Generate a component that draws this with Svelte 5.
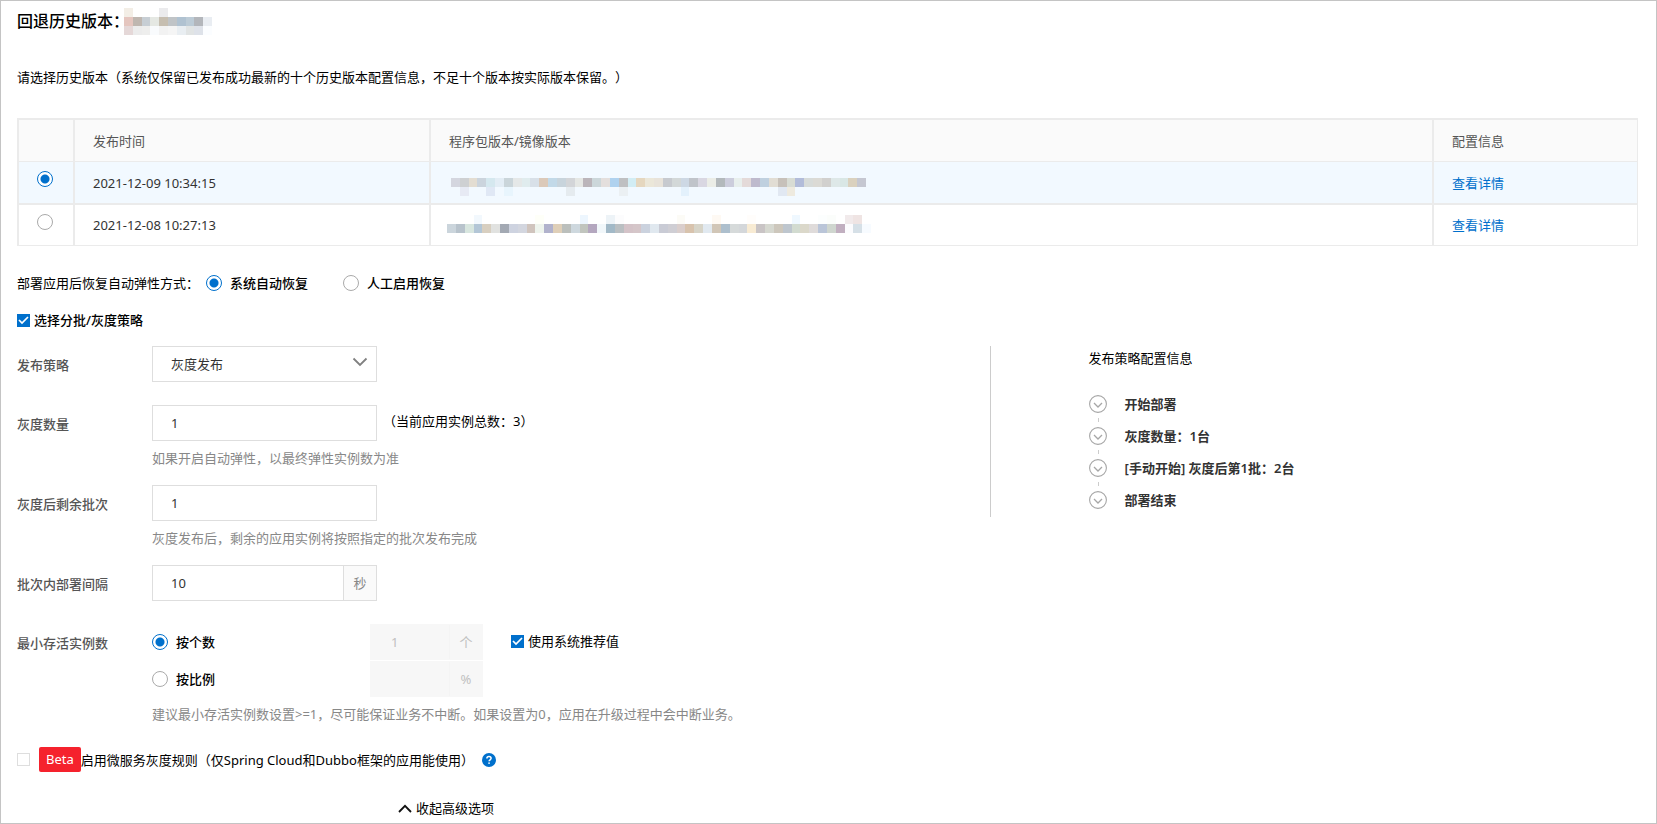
<script>
  let selectedVersion = "v1";
  let restoreMode = "auto";
  let useStrategy = true;
  let strategy = "gray";
  let grayCount = "1";
  let restBatches = "1";
  let interval = "10";
  let aliveMode = "count";
  let aliveCount = "1";
  let alivePercent = "";
  let useRecommended = true;
  let useMicroservice = false;

  // masked values, one string per row of blocks, "-" is an empty block
  const nameMask = [
    "f3eee6 - - - ebebed - - - - -",
    "e5c6bf bfb7b0 c7ced4 e5e8e3 c6beb0 c0c4c7 b0c2d1 bccbd6 b3b6bb e9edf2",
    "e5d8d8 ececec eeeeed f9fbfd f2f2f2 f5f5f5 e9eef2 e1e4e4 dee2e9 fbfdff"
  ];

  const versions = [
    {
      id: "v1",
      time: "2021-12-09 10:34:15",
      mask: [
        "d4d6df ced0d2 e3ddd2 cbd4dd d5e8ef e3edf5 cad5da e5e8e8 e0ecee d8e0e8 dbc9b9 c2d9e8 c8d4dc d3d5d8 e5e7e4 bbb5ba ccd7da e4dfdd afd2ef bfc0c2 d2edf4 e5d7bf ebe7d9 e8e3da c7cacf d3d8d8 cdd8e4 c0c4ca d9d7e2 ebede7 b3b9bc cccddc e8efed e4dad9 bebacd bfd0df e1ddd4 c7c1ba d8dcd4 b2bcd9 d7dbd9 dbdad5 d1d0ce dee8e8 d9e7e5 dad1be c5c7d1",
        "- e7eaf4 - - e0e8f5 - e8f5fd - - - - - - e5ebef - - - - - ebf0f3 - - - - - - e3f1fc - - - - - - - - - - e1e8f2 eeeadf - - - - - - - -"
      ]
    },
    {
      id: "v2",
      time: "2021-12-08 10:27:13",
      mask: [
        "- - - f2f8fd - - - - - - fefff8 - - - - edf6fe - - edf3f7 fcfcfd - - - - - - fcfbf6 - - - fef9f3 - - - fffdfb - - - - eff8ff - - fcfefe fbfdfb - f1eaeb efe4e3 -",
        "cbd5dc b8c3cc d8e6df b3c6d6 d8cfc0 e1e2e0 a3a9b3 ced3e0 d3d6df d0c4bd eef4ed b1b2cc dfcfb8 bbbfbc ced8de c1c5be b4a7bf f1f7fa a2b9c7 babfc2 d4c3c8 d5c6c9 cbd2de e0e8ef c9cbd5 cfced4 dacecc d8c3ad d7d4c8 e1e9f0 d1c6b7 adbfcd d6dada d4d7da f8ebd3 c9c4c5 d6d8d0 cdc7bc bec6ce d2dbd0 dbd8ca dfdbda bac5d8 cfd6cf c1afc0 fcfcfe d6e0e7 f7fbff"
      ]
    }
  ];

  const steps = ["开始部署", "灰度数量：1台", "[手动开始] 灰度后第1批：2台", "部署结束"];
</script>

{#snippet mosaic(rows, label)}
  <svg
    class="mosaic"
    style="width: {Math.round(rows[0].split(' ').length * 8.83)}px; height: {rows.length * 9}px"
    viewBox="0 0 {rows[0].split(' ').length} {rows.length}"
    preserveAspectRatio="none"
    shape-rendering="crispEdges"
    role="img"
    aria-label={label}
  >
    {#each rows as row, y}
      {#each row.split(" ") as color, x}
        {#if color !== "-"}
          <rect {x} {y} width="1" height="1" fill="#{color}" />
        {/if}
      {/each}
    {/each}
  </svg>
{/snippet}

<main class="page">
  <header>
    <h1>回退历史版本：</h1>
    {@render mosaic(nameMask, "应用名称")}
  </header>

  <p class="intro">
    请选择历史版本（系统仅保留已发布成功最新的十个历史版本配置信息，不足十个版本按实际版本保留。）
  </p>

  <table>
    <colgroup>
      <col class="col-radio" />
      <col class="col-time" />
      <col />
      <col class="col-config" />
    </colgroup>
    <thead>
      <tr>
        <th></th>
        <th>发布时间</th>
        <th>程序包版本/镜像版本</th>
        <th>配置信息</th>
      </tr>
    </thead>
    <tbody>
      {#each versions as version, i}
        <tr class:selected={selectedVersion === version.id}>
          <td class="cell-radio">
            <input
              type="radio"
              name="version"
              value={version.id}
              aria-label={version.time}
              bind:group={selectedVersion}
            />
          </td>
          <td>{version.time}</td>
          <td class="mask-{i}">{@render mosaic(version.mask, "镜像版本")}</td>
          <td><a href="#detail">查看详情</a></td>
        </tr>
      {/each}
    </tbody>
  </table>

  <div class="restore" role="radiogroup" aria-labelledby="restore-label">
    <span id="restore-label">部署应用后恢复自动弹性方式：</span>
    <label class="option">
      <input type="radio" name="restore" value="auto" bind:group={restoreMode} />
      系统自动恢复
    </label>
    <label class="option">
      <input type="radio" name="restore" value="manual" bind:group={restoreMode} />
      人工启用恢复
    </label>
  </div>

  <label class="check strong">
    <input type="checkbox" bind:checked={useStrategy} />
    选择分批/灰度策略
  </label>

  <div class="columns">
    <form>
      <div class="row">
        <label class="name" for="strategy">发布策略</label>
        <div class="select">
          <select id="strategy" bind:value={strategy}>
            <option value="gray">灰度发布</option>
            <option value="batch">分批发布</option>
          </select>
          <svg width="16" height="10" viewBox="0 0 16 10" aria-hidden="true">
            <path d="M1.5 1.5 8 8l6.5-6.5" fill="none" stroke="#808080" stroke-width="1.8" />
          </svg>
        </div>
      </div>

      <div class="row">
        <label class="name" for="gray-count">灰度数量</label>
        <div>
          <div class="line">
            <input id="gray-count" class="field" type="text" bind:value={grayCount} />
            <span class="total">（当前应用实例总数：3）</span>
          </div>
          <p class="hint">如果开启自动弹性，以最终弹性实例数为准</p>
        </div>
      </div>

      <div class="row">
        <label class="name" for="rest-batches">灰度后剩余批次</label>
        <div>
          <div class="line">
            <input id="rest-batches" class="field" type="text" bind:value={restBatches} />
          </div>
          <p class="hint">灰度发布后，剩余的应用实例将按照指定的批次发布完成</p>
        </div>
      </div>

      <div class="row">
        <label class="name" for="interval">批次内部署间隔</label>
        <div class="group">
          <input id="interval" type="text" bind:value={interval} />
          <span class="unit">秒</span>
        </div>
      </div>

      <div class="row">
        <span class="name" id="alive-label">最小存活实例数</span>
        <div>
          <div class="alive">
            <div class="alive-modes" role="radiogroup" aria-labelledby="alive-label">
              <label class="option">
                <input type="radio" name="alive" value="count" bind:group={aliveMode} />
                按个数
              </label>
              <label class="option">
                <input type="radio" name="alive" value="percent" bind:group={aliveMode} />
                按比例
              </label>
            </div>
            <div class="alive-values">
              <div class="group disabled">
                <input type="text" aria-label="按个数" disabled bind:value={aliveCount} />
                <span class="unit">个</span>
              </div>
              <div class="group disabled">
                <input type="text" aria-label="按比例" disabled bind:value={alivePercent} />
                <span class="unit">%</span>
              </div>
            </div>
            <label class="check recommended">
              <input type="checkbox" bind:checked={useRecommended} />
              使用系统推荐值
            </label>
          </div>
          <p class="hint">
            建议最小存活实例数设置&gt;=1，尽可能保证业务不中断。如果设置为0，应用在升级过程中会中断业务。
          </p>
        </div>
      </div>
    </form>

    <aside>
      <h2>发布策略配置信息</h2>
      <ol>
        {#each steps as step}
          <li>
            <svg width="18" height="18" viewBox="0 0 18 18" aria-hidden="true">
              <circle cx="9" cy="9" r="8.4" fill="none" stroke="#a6a6a6" stroke-width="1.1" />
              <path d="M5 8l4 4 4-4" fill="none" stroke="#a6a6a6" stroke-width="1.3" />
            </svg>
            {step}
          </li>
        {/each}
      </ol>
    </aside>
  </div>

  <div class="micro">
    <input id="micro" type="checkbox" bind:checked={useMicroservice} />
    <span class="beta">Beta</span>
    <label for="micro">启用微服务灰度规则（仅Spring Cloud和Dubbo框架的应用能使用）</label>
    <button class="help" type="button" aria-label="帮助">
      <svg width="14" height="14" viewBox="0 0 14 14" aria-hidden="true">
        <circle cx="7" cy="7" r="7" fill="#0070cc" />
        <path
          d="M4.9 5.6C4.9 4.2 5.8 3.5 7 3.5s2.1.7 2.1 1.8c0 1.5-2 1.5-2 3"
          fill="none"
          stroke="#fff"
          stroke-width="1.5"
        />
        <rect x="6.3" y="9.4" width="1.5" height="1.5" fill="#fff" />
      </svg>
    </button>
  </div>

  <button class="collapse" type="button">
    <svg width="14" height="9" viewBox="0 0 14 9" aria-hidden="true">
      <path d="M1 8l6-6.2L13 8" fill="none" stroke="#111" stroke-width="1.8" />
    </svg>
    收起高级选项
  </button>
</main>

<style>
  :global(body) {
    margin: 0;
    background: #fff;
  }

  .page {
    box-sizing: border-box;
    padding: 7px 18px 5px 16px;
    border: 1px solid #c4c4c4;
    font: 13px/20px "Noto Sans", "Noto Sans CJK SC", sans-serif;
    text-spacing-trim: space-all;
    color: #000;
  }

  header {
    display: flex;
    align-items: center;
    height: 26px;
  }

  h1 {
    margin: 0;
    width: 107px;
    font-size: 16px;
    font-weight: 500;
    line-height: 24px;
    white-space: nowrap;
  }

  .mosaic {
    display: block;
    flex: none;
  }

  p {
    margin: 0;
  }

  .intro {
    margin: 33px 0 31px;
  }

  input,
  select,
  button {
    margin: 0;
    font: inherit;
    color: inherit;
  }

  table {
    width: 100%;
    table-layout: fixed;
    border-collapse: separate;
    border-spacing: 0;
    border: solid #ebebeb;
    border-width: 2px 1px 1px 0;
  }

  .col-radio {
    width: 56px;
  }

  .col-time {
    width: 356px;
  }

  .col-config {
    width: 205px;
  }

  th,
  td {
    box-sizing: border-box;
    height: 42px;
    padding: 0 18px;
    border-left: 2px solid #ebebeb;
    text-align: left;
    font-weight: 400;
    color: #333;
  }

  th {
    height: 41px;
    background: #fafafa;
    color: #555;
  }

  td {
    border-top: 2px solid #ebebeb;
  }

  tr:first-child td {
    border-top-width: 1px;
  }

  .selected td {
    background: #f2f9ff;
  }

  .cell-radio {
    padding-bottom: 7px;
  }

  .mask-0 {
    padding: 9px 0 0 20px;
  }

  .mask-1 {
    padding: 0 0 2px 16px;
  }

  a {
    color: #0070cc;
    text-decoration: none;
  }

  input[type="radio"] {
    appearance: none;
    display: block;
    flex: none;
    width: 16px;
    height: 16px;
    border: 1px solid #aaa;
    border-radius: 50%;
    background: #fff;
  }

  input[type="radio"]:checked {
    border-color: #0070cc;
    background: radial-gradient(circle, #0070cc 4px, #fff 5px);
  }

  input[type="checkbox"] {
    appearance: none;
    flex: none;
    width: 13px;
    height: 13px;
    border: 1px solid #dedede;
    background: #fff;
  }

  input[type="checkbox"]:checked {
    border-color: #0070cc;
    background: #0070cc
      url("data:image/svg+xml,%3Csvg xmlns='http://www.w3.org/2000/svg' viewBox='0 0 11 11'%3E%3Cpath d='M1 5l3 3 6-6' fill='none' stroke='%23fff' stroke-width='1.7'/%3E%3C/svg%3E")
      center / 11px 11px no-repeat;
  }

  .restore {
    display: flex;
    align-items: center;
    margin-top: 27px;
  }

  #restore-label {
    width: 189px;
  }

  .option {
    display: flex;
    align-items: center;
    gap: 8px;
    margin-right: 35px;
    font-weight: 500;
  }

  .check {
    display: flex;
    align-items: center;
    gap: 4px;
  }

  .strong {
    margin-top: 17px;
    font-weight: 500;
  }

  .columns {
    display: grid;
    grid-template-columns: 3fr 2fr;
    align-items: start;
    margin-top: 16px;
  }

  form {
    display: flex;
    flex-direction: column;
    gap: 20px;
  }

  .row {
    display: flex;
    align-items: flex-start;
    min-height: 39px;
  }

  .name {
    width: 135px;
    line-height: 38px;
    font-weight: 500;
    color: #555;
  }

  .select {
    display: grid;
    align-items: center;
    justify-items: end;
    width: 225px;
  }

  .select select,
  .select svg {
    grid-area: 1 / 1;
  }

  .select svg {
    margin: 0 9px 4px 0;
    pointer-events: none;
  }

  select,
  .field,
  .group {
    box-sizing: border-box;
    width: 225px;
    height: 36px;
    padding: 0 18px;
    border: 1px solid #dedede;
    border-radius: 0;
    background: #fff;
    color: #333;
  }

  select {
    appearance: none;
  }

  .line {
    display: flex;
  }

  .total {
    margin-left: 6px;
    line-height: 32px;
  }

  .hint {
    margin-top: 10px;
    line-height: 14px;
    color: #888;
  }

  .group {
    display: flex;
    padding: 0;
  }

  .group input {
    flex: 1;
    min-width: 0;
    padding: 0 18px;
    border: 0;
    background: none;
  }

  .unit {
    width: 32px;
    border-left: 1px solid #dedede;
    background: #fafafa;
    line-height: 34px;
    text-align: center;
    color: #888;
  }

  .alive {
    display: flex;
  }

  .alive-modes {
    display: flex;
    flex-direction: column;
    gap: 17px;
    width: 218px;
    padding-top: 8px;
  }

  .alive-values {
    display: flex;
    flex-direction: column;
    gap: 1px;
  }

  .disabled {
    width: 113px;
    border-color: #f7f7f7;
    background: #f7f7f7;
    color: #c1c1c1;
  }

  .disabled input {
    padding: 0 20px;
  }

  .disabled .unit {
    border-color: #f4f4f4;
    background: #f7f7f7;
    color: #c1c1c1;
  }

  .recommended {
    height: 34px;
    margin-left: 28px;
  }

  aside {
    box-sizing: border-box;
    min-height: 171px;
    padding-left: 98px;
    border-left: 1px solid #ccc;
  }

  h2 {
    margin: 2px 0 26px;
    font-size: 13px;
    font-weight: 400;
    line-height: 20px;
  }

  ol {
    display: flex;
    flex-direction: column;
    gap: 12px;
    margin: 0;
    padding: 0;
    list-style: none;
  }

  li {
    display: flex;
    align-items: center;
    gap: 18px;
    position: relative;
    font-weight: 600;
    color: #333;
  }

  li + li::before {
    content: "";
    position: absolute;
    top: -8px;
    left: 9px;
    height: 4px;
    border-left: 1px solid #ccc;
  }

  .micro {
    display: flex;
    align-items: center;
    margin-top: 26px;
  }

  .beta {
    margin-left: 9px;
    padding: 0 7px;
    border-radius: 2px;
    background: #f5222d;
    line-height: 25px;
    color: #fff;
  }

  .help,
  .collapse {
    display: flex;
    align-items: center;
    padding: 0;
    border: 0;
    background: none;
    cursor: pointer;
  }

  .help {
    margin-left: 8px;
  }

  .collapse {
    gap: 4px;
    margin: 26px 0 0 381px;
  }
</style>
